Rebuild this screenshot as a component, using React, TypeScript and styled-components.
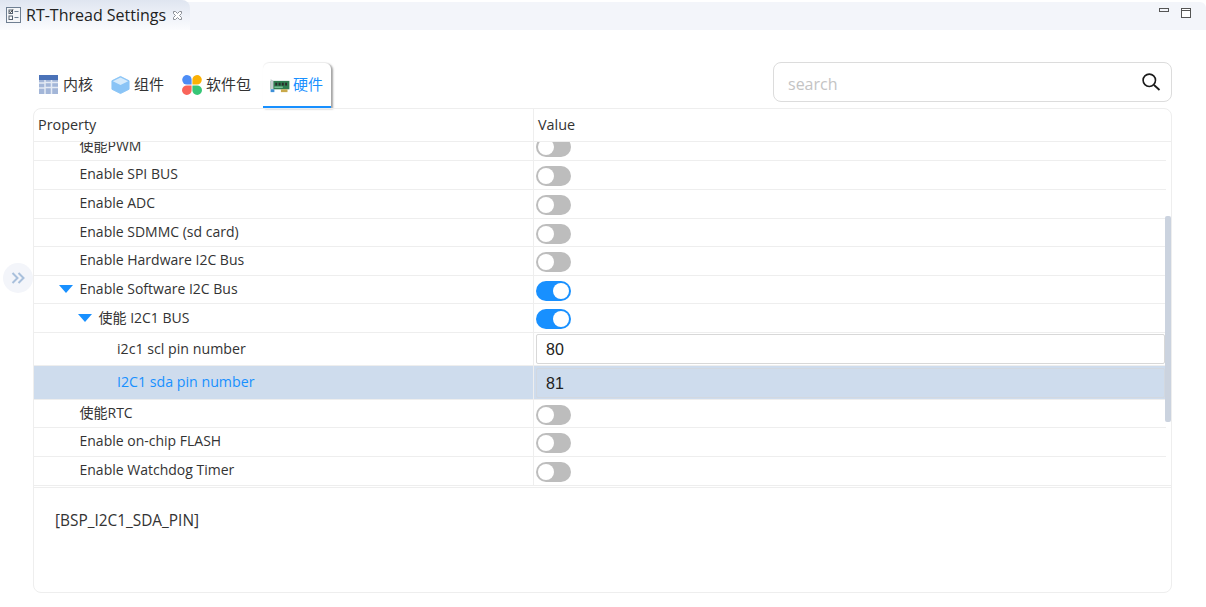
import styled, { createGlobalStyle } from "styled-components";

const Global = createGlobalStyle`
  html, body { margin: 0; padding: 0; background: #fff; }
  body { font-family: "Open Sans", "Noto Sans CJK SC", sans-serif; color: #333; overflow: hidden; }
`;

type RowData = {
  label: string;
  indent: number;
  arrow?: boolean;
  toggle?: boolean;
  input?: string;
  height: number;
  selected?: boolean;
};

const rows: RowData[] = [
  { label: "使能PWM", indent: 45.5, toggle: false, height: 29 },
  { label: "Enable SPI BUS", indent: 45.5, toggle: false, height: 29 },
  { label: "Enable ADC", indent: 45.5, toggle: false, height: 29 },
  { label: "Enable SDMMC (sd card)", indent: 45.5, toggle: false, height: 28 },
  { label: "Enable Hardware I2C Bus", indent: 45.5, toggle: false, height: 29 },
  { label: "Enable Software I2C Bus", indent: 45.5, arrow: true, toggle: true, height: 28 },
  { label: "使能 I2C1 BUS", indent: 64.5, arrow: true, toggle: true, height: 29 },
  { label: "i2c1 scl pin number", indent: 83, input: "80", height: 33 },
  { label: "I2C1 sda pin number", indent: 83, input: "81", height: 34, selected: true },
  { label: "使能RTC", indent: 45.5, toggle: false, height: 28 },
  { label: "Enable on-chip FLASH", indent: 45.5, toggle: false, height: 29 },
  { label: "Enable Watchdog Timer", indent: 45.5, toggle: false, height: 29 },
];

const Page = styled.div`
  width: 1206px;
  height: 607px;
  display: flex;
  flex-direction: column;
  position: relative;
  overflow: hidden;
`;

const TitleBar = styled.div`
  height: 28px;
  margin-top: 2px;
  background: #f3f5fa;
  display: flex;
  justify-content: space-between;
  border-top-right-radius: 6px;
`;

const EditorTab = styled.div`
  width: 190px;
  height: 30px;
  margin-top: -2px;
  box-sizing: border-box;
  padding-left: 6px;
  display: flex;
  align-items: center;
  gap: 4px;
  border-top-right-radius: 8px;
  background: linear-gradient(#dfe5f0, #f0f3f9 60%, #fbfcfe);
  font-size: 16px;
  color: #222;
`;

const WindowButtons = styled.div`
  display: flex;
  gap: 12px;
  padding: 6px 15px 0 0;
  align-items: flex-start;
`;

const Content = styled.div`
  flex: 1;
  padding: 32px 34px 14px 33px;
  display: flex;
  flex-direction: column;
`;

const Toolbar = styled.div`
  height: 46px;
  display: flex;
  justify-content: space-between;
  align-items: flex-start;
`;

const Tabs = styled.div`
  display: flex;
  padding-top: 1px;
  height: 45px;
`;

const Tab = styled.div<{ $active?: boolean }>`
  display: flex;
  align-items: center;
  box-sizing: border-box;
  height: 45px;
  padding: 0 ${(p) => (p.$active ? "8px" : "12px")} 2px ${(p) => (p.$active ? "7px" : "6px")};
  gap: ${(p) => (p.$active ? "3px" : "4px")};
  font-size: 15px;
  color: ${(p) => (p.$active ? "#1890ff" : "#333")};
  ${(p) =>
    p.$active &&
    `
    border-bottom: 2px solid #1890ff;
    border-top-right-radius: 6px;
    border-top-left-radius: 6px;
    background: #fff;
    box-shadow: 2px 1px 2px rgba(90, 90, 90, 0.55), 0 -1px 1px rgba(0, 0, 0, 0.06);
  `}
`;

const TabLabel = styled.span<{ $active?: boolean }>`
  position: relative;
  top: ${(p) => (p.$active ? "0" : "-1px")};
`;

const SearchBox = styled.div`
  width: 399px;
  height: 40px;
  box-sizing: border-box;
  border: 1px solid #dcdcdc;
  border-radius: 8px;
  display: flex;
  align-items: center;
  justify-content: space-between;
  padding: 0 10px 0 14px;
  font-size: 16px;
  color: #c4c4c4;
`;

const SearchText = styled.span`
  padding-top: 3px;
`;

const Panel = styled.div`
  flex: 1;
  border: 1px solid #eeeeee;
  border-radius: 8px;
  display: flex;
  flex-direction: column;
  overflow: hidden;
`;

const HeaderRow = styled.div`
  height: 32px;
  flex: none;
  display: grid;
  grid-template-columns: 499px 1fr;
  border-bottom: 1px solid #eeeeee;
  font-size: 14.4px;
  font-weight: 500;
  color: #333;
`;

const HeaderCell = styled.div`
  padding: 0 0 2px 4px;
  display: flex;
  align-items: center;
  & + & {
    border-left: 1px solid #eeeeee;
  }
`;

const TableBody = styled.div`
  height: 346px;
  flex: none;
  position: relative;
  overflow: hidden;
  border-bottom: 3px double #eeeeee;
  box-sizing: border-box;
`;

const RowList = styled.div`
  margin-top: -10px;
  width: 1132px;
`;

const Row = styled.div<{ $height: number; $selected?: boolean }>`
  height: ${(p) => p.$height}px;
  box-sizing: border-box;
  display: grid;
  grid-template-columns: 499px 1fr;
  border-bottom: 1px solid #eeeeee;
  background: ${(p) => (p.$selected ? "#cedced" : "transparent")};
`;

const LabelCell = styled.div<{ $indent: number; $selected?: boolean; $field?: boolean }>`
  padding-left: ${(p) => p.$indent}px;
  padding-bottom: ${(p) => (p.$field && !p.$selected ? "1px" : "3px")};
  box-sizing: border-box;
  position: relative;
  display: flex;
  align-items: center;
  font-size: ${(p) => (p.$field ? "14.2px" : "14px")};
  color: ${(p) => (p.$selected ? "#1890ff" : "#333")};
`;

const Caret = styled.span`
  position: absolute;
  margin-left: -20.5px;
  margin-top: 2px;
  width: 0;
  height: 0;
  border-left: 7.5px solid transparent;
  border-right: 7.5px solid transparent;
  border-top: 8px solid #1890ff;
`;

const ValueCell = styled.div`
  border-left: 1px solid #eeeeee;
  padding-left: 2px;
  display: flex;
  align-items: center;
`;

const Toggle = styled.div<{ $on: boolean }>`
  width: 35px;
  height: 20px;
  border-radius: 10px;
  margin-top: 2px;
  background: ${(p) => (p.$on ? "#1890ff" : "#bdbdbd")};
  display: flex;
  align-items: center;
  justify-content: ${(p) => (p.$on ? "flex-end" : "flex-start")};
  padding: 0 2px;
  box-sizing: border-box;
`;

const Knob = styled.div`
  width: 16px;
  height: 16px;
  border-radius: 50%;
  background: #fff;
`;

const ValueInput = styled.div<{ $selected?: boolean }>`
  width: 629px;
  height: 30px;
  box-sizing: border-box;
  border: 1px solid ${(p) => (p.$selected ? "#d2d8e0" : "#d8d8d8")};
  border-radius: 2px;
  padding: 2px 0 0 9px;
  display: flex;
  align-items: center;
  font-family: "Liberation Sans", sans-serif;
  font-size: 16px;
  color: #222;
`;

const ScrollThumb = styled.div`
  position: absolute;
  right: 0;
  top: 74px;
  width: 6px;
  height: 206px;
  border-radius: 2px;
  background: #cbd3df;
`;

const Description = styled.div`
  flex: 1;
  padding: 22px 0 0 21px;
  font-size: 15.4px;
  color: #333;
`;

const CollapseButton = styled.div`
  position: absolute;
  left: 3px;
  top: 263px;
  width: 30px;
  height: 30px;
  border-radius: 50%;
  background: #f3f5fa;
  display: flex;
  align-items: center;
  justify-content: center;
`;

const SettingsIcon = () => (
  <svg width="16" height="16" viewBox="0 0 16 16" fill="none">
    <rect x="0.5" y="0.5" width="14" height="15" fill="#f5f6f8" stroke="#6f7f92" />
    <rect x="3" y="3" width="3.5" height="3.5" fill="#fff" stroke="#55606e" />
    <path d="M3.5 4.5l1 1 2.5-3" stroke="#333" />
    <path d="M8.5 4.5h4M8.5 10.5h4" stroke="#6f7f92" />
    <rect x="3" y="9" width="3.5" height="3.5" fill="#fff" stroke="#55606e" />
  </svg>
);

const CloseIcon = () => (
  <svg width="11" height="11" viewBox="0 0 11 11" fill="none" style={{ marginLeft: 2 }}>
    <path d="M1.5 1.5h2l2 2 2-2h2v2l-2 2 2 2v2h-2l-2-2-2 2h-2v-2l2-2-2-2z" fill="#fff" stroke="#8a8f96" />
  </svg>
);

const MinIcon = () => (
  <svg width="10" height="5" viewBox="0 0 10 5" fill="none">
    <rect x="0.5" y="0.5" width="9" height="3" fill="#f3f5fa" stroke="#555" />
  </svg>
);

const MaxIcon = () => (
  <svg width="10" height="10" viewBox="0 0 10 10" fill="none">
    <rect x="0.5" y="0.5" width="9" height="9" fill="#fff" stroke="#555" />
    <path d="M0.5 2.5h9" stroke="#555" />
  </svg>
);

const TableIcon = () => (
  <svg width="20" height="19" viewBox="0 0 20 19">
    <rect width="19" height="19" fill="#a3b6d8" />
    <rect width="19" height="5" fill="#4a72b8" />
    <path d="M6 7.5h13M6 12.5h13" stroke="#e4eaf4" strokeWidth="1.5" fill="none" />
    <path d="M6 5v14M12.5 5v14M0 8h6M0 13h6" stroke="#e4eaf4" strokeWidth="1.5" fill="none" />
  </svg>
);

const CubeIcon = () => (
  <svg width="19" height="20" viewBox="0 0 20 20">
    <path d="M10 1l9 4.5v9L10 19l-9-4.5v-9z" fill="#8ac4f6" stroke="#8ac4f6" strokeLinejoin="round" />
    <path d="M10 2l8 4-8 4-8-4z" fill="#d6ebfc" />
  </svg>
);

const DotsIcon = () => (
  <svg width="20" height="20" viewBox="0 0 20 20">
    <path d="M5 0a5 5 0 0 1 4.6 4.6V9.6H5A4.8 4.8 0 0 1 5 0z" fill="#4d8df6" />
    <path d="M15 0a4.8 4.8 0 0 1 0 9.6h-4.6V5A4.8 4.8 0 0 1 15 0z" fill="#fbb104" />
    <path d="M5 10.4h4.6V15A4.8 4.8 0 1 1 5 10.4z" fill="#f9645a" />
    <path d="M10.4 10.4H15a4.8 4.8 0 1 1-4.6 4.6z" fill="#37c677" />
  </svg>
);

const BoardIcon = () => (
  <svg width="20" height="15" viewBox="0 0 20 16" style={{ marginTop: 5 }}>
    <rect x="0" y="2" width="20" height="9" fill="#2f7d4f" />
    <path d="M0 0l3 2v9H0z" fill="#c8ced2" />
    <rect x="5" y="4" width="2" height="3" fill="#2a2a2a" />
    <rect x="8.5" y="4" width="2" height="3" fill="#2a2a2a" />
    <rect x="12" y="4" width="2" height="3" fill="#2a2a2a" />
    <rect x="15.5" y="4" width="2" height="3" fill="#2a2a2a" />
    <rect x="4" y="8" width="9" height="1.5" fill="#7ec49a" />
    <rect x="11" y="11" width="7" height="3" fill="#c9a94a" />
    <rect x="0" y="11" width="4" height="3" fill="#3d8fd8" />
  </svg>
);

const SearchIcon = () => (
  <svg width="20" height="20" viewBox="0 0 20 20" fill="none" stroke="#1a1a1a">
    <circle cx="8.3" cy="8.3" r="6.2" strokeWidth="1.6" />
    <path d="M13 13l5.5 5" strokeWidth="1.8" />
  </svg>
);

const ChevronsIcon = () => (
  <svg width="14" height="12" viewBox="0 0 14 12" fill="none" stroke="#a9c0dc" strokeWidth="2">
    <path d="M1.5 1l5 5-5 5M7.5 1l5 5-5 5" />
  </svg>
);

const App = () => (
  <Page>
    <Global />
    <TitleBar>
      <EditorTab>
        <SettingsIcon />
        RT-Thread Settings
        <CloseIcon />
      </EditorTab>
      <WindowButtons>
        <MinIcon />
        <MaxIcon />
      </WindowButtons>
    </TitleBar>
    <Content>
      <Toolbar>
        <Tabs>
          <Tab>
            <TableIcon />
            <TabLabel>内核</TabLabel>
          </Tab>
          <Tab>
            <CubeIcon />
            <TabLabel>组件</TabLabel>
          </Tab>
          <Tab>
            <DotsIcon />
            <TabLabel>软件包</TabLabel>
          </Tab>
          <Tab $active>
            <BoardIcon />
            <TabLabel $active>硬件</TabLabel>
          </Tab>
        </Tabs>
        <SearchBox>
          <SearchText>search</SearchText>
          <SearchIcon />
        </SearchBox>
      </Toolbar>
      <Panel>
        <HeaderRow>
          <HeaderCell>Property</HeaderCell>
          <HeaderCell>Value</HeaderCell>
        </HeaderRow>
        <TableBody>
          <RowList>
            {rows.map((row) => (
              <Row key={row.label} $height={row.height} $selected={row.selected}>
                <LabelCell $indent={row.indent} $selected={row.selected} $field={!!row.input}>
                  {row.arrow && <Caret />}
                  {row.label}
                </LabelCell>
                <ValueCell>
                  {row.toggle !== undefined && (
                    <Toggle $on={row.toggle}>
                      <Knob />
                    </Toggle>
                  )}
                  {row.input && <ValueInput $selected={row.selected}>{row.input}</ValueInput>}
                </ValueCell>
              </Row>
            ))}
          </RowList>
          <ScrollThumb />
        </TableBody>
        <Description>[BSP_I2C1_SDA_PIN]</Description>
      </Panel>
    </Content>
    <CollapseButton>
      <ChevronsIcon />
    </CollapseButton>
  </Page>
);

export default App;
